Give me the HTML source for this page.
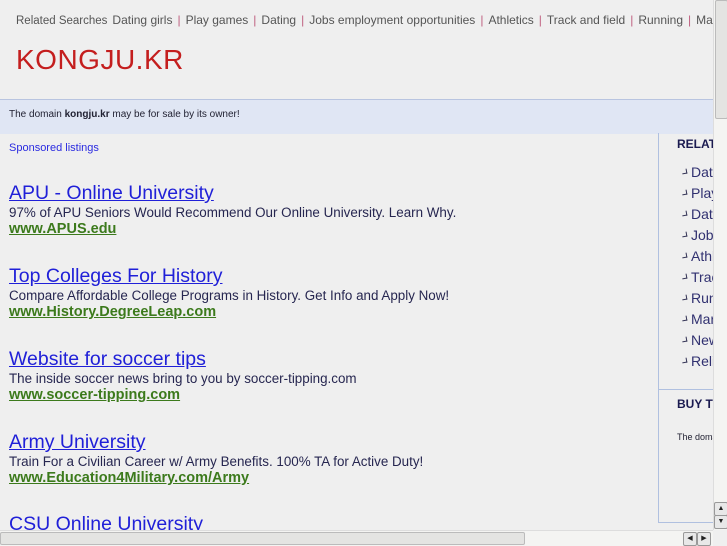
<!DOCTYPE html>
<html><head><meta charset="utf-8"><style>
body{margin:0;width:727px;height:545px;overflow:hidden;background:#efefef;font-family:"Liberation Sans",sans-serif;position:relative}
.a{position:absolute;white-space:nowrap}
.topw{position:absolute;left:0;top:0;width:713px;height:40px;overflow:hidden}
.top{top:13px;left:16px;font-size:12px;color:#555}
.top span.s{color:#555;font-size:11.5px;margin-right:5px}
.top i{font-style:normal;color:#c06080;margin:0 5px}
.title{top:44px;left:16px;font-size:28px;color:#c41e1e;letter-spacing:0.5px}
.band{position:absolute;left:0;top:99px;width:713px;height:34px;background:#e0e6f4;border-top:1px solid #b8c4e0}
.band div{position:absolute;left:9px;top:9px;font-size:10px;color:#223}
.sp{top:142px;left:9px;font-size:11px;color:#2a2ae0}
.ad{position:absolute;left:9px;white-space:nowrap}
.ad .t{font-size:19.5px;color:#2020d8;text-decoration:underline;line-height:22px}
.ad .d{font-size:13.4px;color:#262650;line-height:17px}
.ad .u{font-size:14.5px;font-weight:bold;color:#3c7a1c;text-decoration:underline;line-height:17px}
.rpw{position:absolute;left:658px;top:133px;width:55px;height:391px;overflow:hidden}
.rp{position:absolute;left:0;top:0;width:60px;height:389px;border-left:1px solid #b0c0e0;border-bottom:1px solid #b0c0e0}
.rp .h{position:absolute;left:18px;font-size:12px;font-weight:bold;color:#1a1a50;white-space:nowrap}
.rp ul{position:absolute;left:22px;top:30px;margin:0;padding:0;list-style:none}
.rp li{font-size:14px;color:#303070;height:21px;line-height:18px;position:relative;padding-left:10px;white-space:nowrap}
.rp li:before{content:"";position:absolute;left:1px;top:6px;width:4px;height:4px;border-right:1px solid #335;border-bottom:1px solid #335;transform:rotate(-10deg)}
.rp .sep{position:absolute;left:0;top:256px;width:60px;border-top:1px solid #b0c0e0}
.vs{position:absolute;left:713px;top:0;width:14px;height:530px;background:#f4f4f2;border-left:1px solid #ddd}
.th{position:absolute;left:1px;top:0;width:11px;height:117px;background:#e4e4e2;border:1px solid #bbb;border-radius:2px}
.hs{position:absolute;left:0;top:530px;width:713px;height:15px;background:#f4f4f2;border-top:1px solid #ddd}
.hth{position:absolute;left:0;top:1px;width:523px;height:11px;background:#e4e4e2;border:1px solid #bbb;border-radius:2px}
.btn{position:absolute;width:12px;height:12px;background:#e8e8e8;border:1px solid #999;border-radius:2px;font-size:7px;line-height:12px;text-align:center;color:#222}
</style></head><body>
<div class="topw"><div class="a top"><span class="s">Related Searches</span>Dating girls<i>|</i>Play games<i>|</i>Dating<i>|</i>Jobs employment opportunities<i>|</i>Athletics<i>|</i>Track and field<i>|</i>Running<i>|</i>Marketing</div></div>
<div class="a title">KONGJU.KR</div>
<div class="band"><div>The domain <b>kongju.kr</b> may be for sale by its owner!</div></div>
<div class="a sp">Sponsored listings</div>
<div class="ad" style="top:182px"><div class="t">APU - Online University</div><div class="d">97% of APU Seniors Would Recommend Our Online University. Learn Why.</div><div class="u">www.APUS.edu</div></div>
<div class="ad" style="top:265px"><div class="t">Top Colleges For History</div><div class="d">Compare Affordable College Programs in History. Get Info and Apply Now!</div><div class="u">www.History.DegreeLeap.com</div></div>
<div class="ad" style="top:348px"><div class="t">Website for soccer tips</div><div class="d">The inside soccer news bring to you by soccer-tipping.com</div><div class="u">www.soccer-tipping.com</div></div>
<div class="ad" style="top:431px"><div class="t">Army University</div><div class="d">Train For a Civilian Career w/ Army Benefits. 100% TA for Active Duty!</div><div class="u">www.Education4Military.com/Army</div></div>
<div class="ad" style="top:513px"><div class="t">CSU Online University</div></div>
<div class="rpw"><div class="rp"><div class="h" style="top:4px">RELATED</div>
<ul><li>Dating</li><li>Play</li><li>Dating</li><li>Jobs</li><li>Athletics</li><li>Track</li><li>Running</li><li>Marketing</li><li>News</li><li>Religion</li></ul>
<div class="sep"></div>
<div class="h" style="top:264px">BUY THIS</div>
<div class="a" style="left:18px;top:299px;font-size:9px;color:#223">The domain</div></div></div>
<div class="vs"><div class="th"></div><div class="btn" style="left:0;top:502px">▲</div><div class="btn" style="left:0;top:515px">▼</div></div>
<div class="hs"><div class="hth"></div><div class="btn" style="left:683px;top:1px">◀</div><div class="btn" style="left:697px;top:1px">▶</div></div>
</body></html>
